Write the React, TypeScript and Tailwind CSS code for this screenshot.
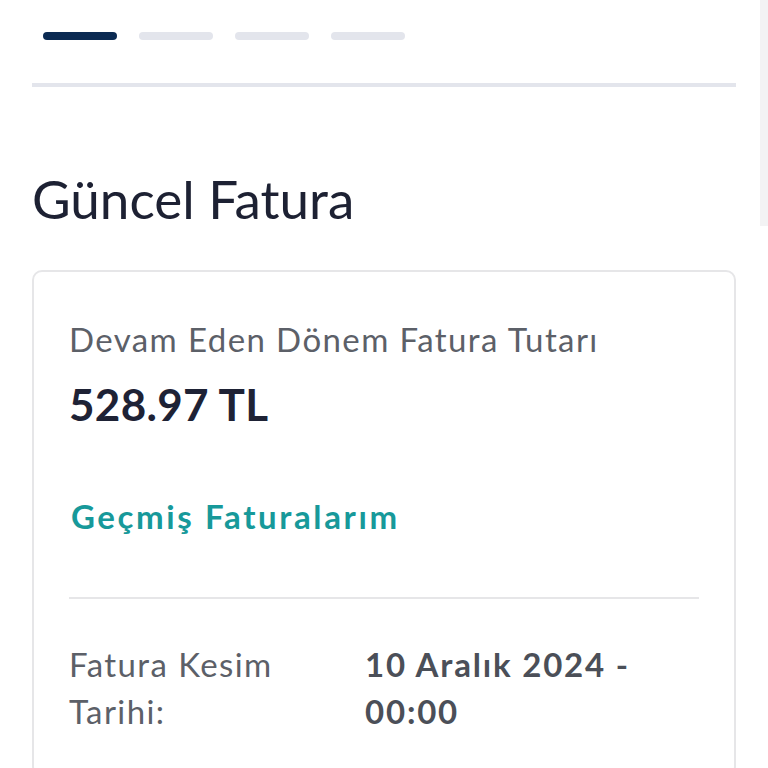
import React from "react";

const steps = [true, false, false, false];

export default function App() {
  return (
    <main
      className="relative min-h-screen overflow-hidden bg-white"
      style={{ fontFamily: "Lato, 'Noto Sans', sans-serif" }}
    >
      <div className="absolute right-0 top-0 h-[226px] w-[8px] bg-[#f3f3f4]" />

      <div className="px-[32px] pt-[32px]">
        <div className="flex gap-[22px] pl-[11px]">
          {steps.map((active, i) => (
            <div
              key={i}
              className={
                active
                  ? "h-[8px] w-[74px] rounded-full bg-[#0b2a52]"
                  : "h-[8px] w-[74px] rounded-full bg-[#e3e5ec]"
              }
            />
          ))}
        </div>
        <div className="mt-[43px] h-[4px] w-[704px] bg-[#e3e5ec]" />

        <h1 className="mt-[80px] text-[53px] leading-[64px] text-[#1d2133]">
          Güncel Fatura
        </h1>

        <section className="mt-[39px] w-[704px] rounded-[10px] border-2 border-[#e6e6e8] px-[35px] pb-[40px] pt-[47px]">
          <p className="text-[33px] leading-[40px] tracking-[1.4px] text-[#5c6068]">
            Devam Eden Dönem Fatura Tutarı
          </p>
          <p className="mt-[19px] text-[44px] font-bold leading-[52px] tracking-[0.3px] text-[#1e2235]">
            528.97 TL
          </p>

          <a className="mt-[66px] block pl-[2px] text-[33px] font-bold leading-[40px] tracking-[2.6px] text-[#17999a]">
            Geçmiş Faturalarım
          </a>

          <div className="mt-[61px] h-[2px] w-full bg-[#e6e6e8]" />

          <div className="mt-[42px] flex">
            <div className="w-[296px] shrink-0">
              <p className="max-w-[230px] text-[33px] leading-[47px] tracking-[1.4px] text-[#5c6068]">
                Fatura Kesim Tarihi:
              </p>
            </div>
            <p className="max-w-[290px] text-[33px] font-bold leading-[47px] tracking-[1.8px] text-[#4b4f58]">
              10 Aralık 2024 - 00:00
            </p>
          </div>
        </section>
      </div>
    </main>
  );
}
